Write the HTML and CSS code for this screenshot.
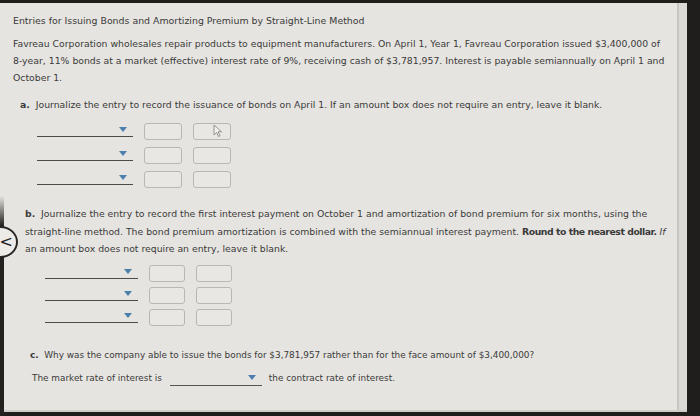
FILE: index.html
```html
<!DOCTYPE html>
<html>
<head>
<meta charset="utf-8">
<link rel="stylesheet" href="styles.css">
</head>
<body>
<div class="screen">
  <div class="page">
    <h1 class="title">Entries for Issuing Bonds and Amortizing Premium by Straight-Line Method</h1>
    <p class="intro">Favreau Corporation wholesales repair products to equipment manufacturers. On April 1, Year 1, Favreau Corporation issued $3,400,000 of<br>8-year, 11% bonds at a market (effective) interest rate of 9%, receiving cash of $3,781,957. Interest is payable semiannually on April 1 and<br>October 1.</p>

    <p class="q q-a"><b>a.</b>&nbsp; Journalize the entry to record the issuance of bonds on April 1. If an amount box does not require an entry, leave it blank.</p>
    <div class="journal journal-a">
      <div class="row"><span class="select"><span class="arrow"></span></span><span class="box"></span><span class="box box-cursor"><svg class="cursor" width="12" height="14" viewBox="0 0 12 14"><path d="M1 1 L1 11 L3.5 8.5 L5.5 12.5 L7 11.8 L5 7.8 L8.5 7.8 Z" fill="#f4f3f0" stroke="#8a8884" stroke-width="0.9"/></svg></span></div>
      <div class="row"><span class="select"><span class="arrow"></span></span><span class="box"></span><span class="box"></span></div>
      <div class="row"><span class="select"><span class="arrow"></span></span><span class="box"></span><span class="box"></span></div>
    </div>

    <p class="q q-b"><b>b.</b>&nbsp; Journalize the entry to record the first interest payment on October 1 and amortization of bond premium for six months, using the<br>straight-line method. The bond premium amortization is combined with the semiannual interest payment. <b class="em">Round to the nearest dollar.</b> <i>If</i><br>an amount box does not require an entry, leave it blank.</p>
    <div class="journal journal-b">
      <div class="row"><span class="select"><span class="arrow"></span></span><span class="box"></span><span class="box"></span></div>
      <div class="row"><span class="select"><span class="arrow"></span></span><span class="box"></span><span class="box"></span></div>
      <div class="row"><span class="select"><span class="arrow"></span></span><span class="box"></span><span class="box"></span></div>
    </div>

    <p class="q q-c"><b>c.</b>&nbsp; Why was the company able to issue the bonds for $3,781,957 rather than for the face amount of $3,400,000?</p>
    <div class="answer"><span>The market rate of interest is</span><span class="select select-c"><span class="arrow"></span></span><span>the contract rate of interest.</span></div>
  </div>
  <div class="edge"></div>
</div>
<div class="bezel-left"></div>
<div class="nav-btn">&lt;</div>
</body>
</html>
```
FILE: styles.css
```css
html, body {
  margin: 0;
  padding: 0;
}
body {
  background: #1f1e1d;
  width: 700px;
  height: 416px;
  overflow: hidden;
  position: relative;
  font-family: "DejaVu Sans", Verdana, sans-serif;
  color: #3a3a3a;
}
.screen {
  display: flex;
  margin-top: 3px;
  width: 687px;
  height: 407px;
  background: #e6e4e0;
  border-bottom: 2px solid #cfcdc8;
}
.page {
  width: 664px;
  padding: 9px 0 0 13px;
  border-right: 2px solid #c8c6c1;
  font-size: 9.3px;
  line-height: 17px;
  white-space: nowrap;
}
.edge {
  flex: 1;
  background: #dcdad6;
}
.title {
  font-size: 9.4px;
  font-weight: normal;
  margin: 0;
  line-height: 17px;
}
.intro {
  margin: 6px 0 0 0;
}
.q {
  margin: 0;
}
.q-a {
  margin-top: 10px;
  padding-left: 7px;
}
.q-b {
  margin-top: 17px;
  padding-left: 12px;
  line-height: 17.5px;
}
.em {
  letter-spacing: -0.45px;
}
.q-c {
  margin-top: 20.5px;
  padding-left: 17px;
  font-size: 8.9px;
}
.journal {
  display: flex;
  flex-direction: column;
}
.journal-a {
  margin-top: 10px;
  padding-left: 24px;
  gap: 7px;
}
.journal-b {
  margin-top: 7.5px;
  padding-left: 32px;
  gap: 5px;
}
.row {
  display: flex;
  align-items: flex-start;
  gap: 11px;
  height: 17px;
}
.select {
  position: relative;
  width: 96px;
  height: 13px;
  border-bottom: 1px solid #4b4b4b;
}
.journal-b .select {
  width: 93px;
}
.arrow {
  position: absolute;
  right: 6px;
  top: 4px;
  width: 0;
  height: 0;
  border-left: 4px solid transparent;
  border-right: 4px solid transparent;
  border-top: 5px solid #4d7fae;
}
.box {
  position: relative;
  width: 36px;
  height: 15px;
  border: 1px solid #b9b7b2;
  border-radius: 3px;
  background: #e9e7e3;
}
.journal-b .box {
  width: 34px;
}
.cursor {
  position: absolute;
  left: 19px;
  top: 0;
}
.answer {
  display: flex;
  align-items: flex-start;
  gap: 7px;
  margin-top: 6px;
  padding-left: 19px;
  font-size: 8.9px;
}
.select-c {
  width: 92px;
  height: 15px;
  margin-left: 1px;
  border-bottom-color: #555;
}
.select-c .arrow {
  right: 6px;
  top: 5px;
}
.bezel-left {
  position: absolute;
  left: 0;
  top: 196px;
  width: 4px;
  height: 220px;
  background: linear-gradient(to bottom, rgba(30,30,30,0), #232221 30px);
}
.nav-btn {
  position: absolute;
  left: -17px;
  top: 226px;
  width: 28px;
  height: 28px;
  border: 2px solid #262626;
  border-radius: 50%;
  background: #ecebe8;
  color: #222;
  font-size: 16px;
  line-height: 27px;
  text-align: right;
  padding-right: 3px;
  box-sizing: content-box;
  font-family: "DejaVu Sans", sans-serif;
}
```
